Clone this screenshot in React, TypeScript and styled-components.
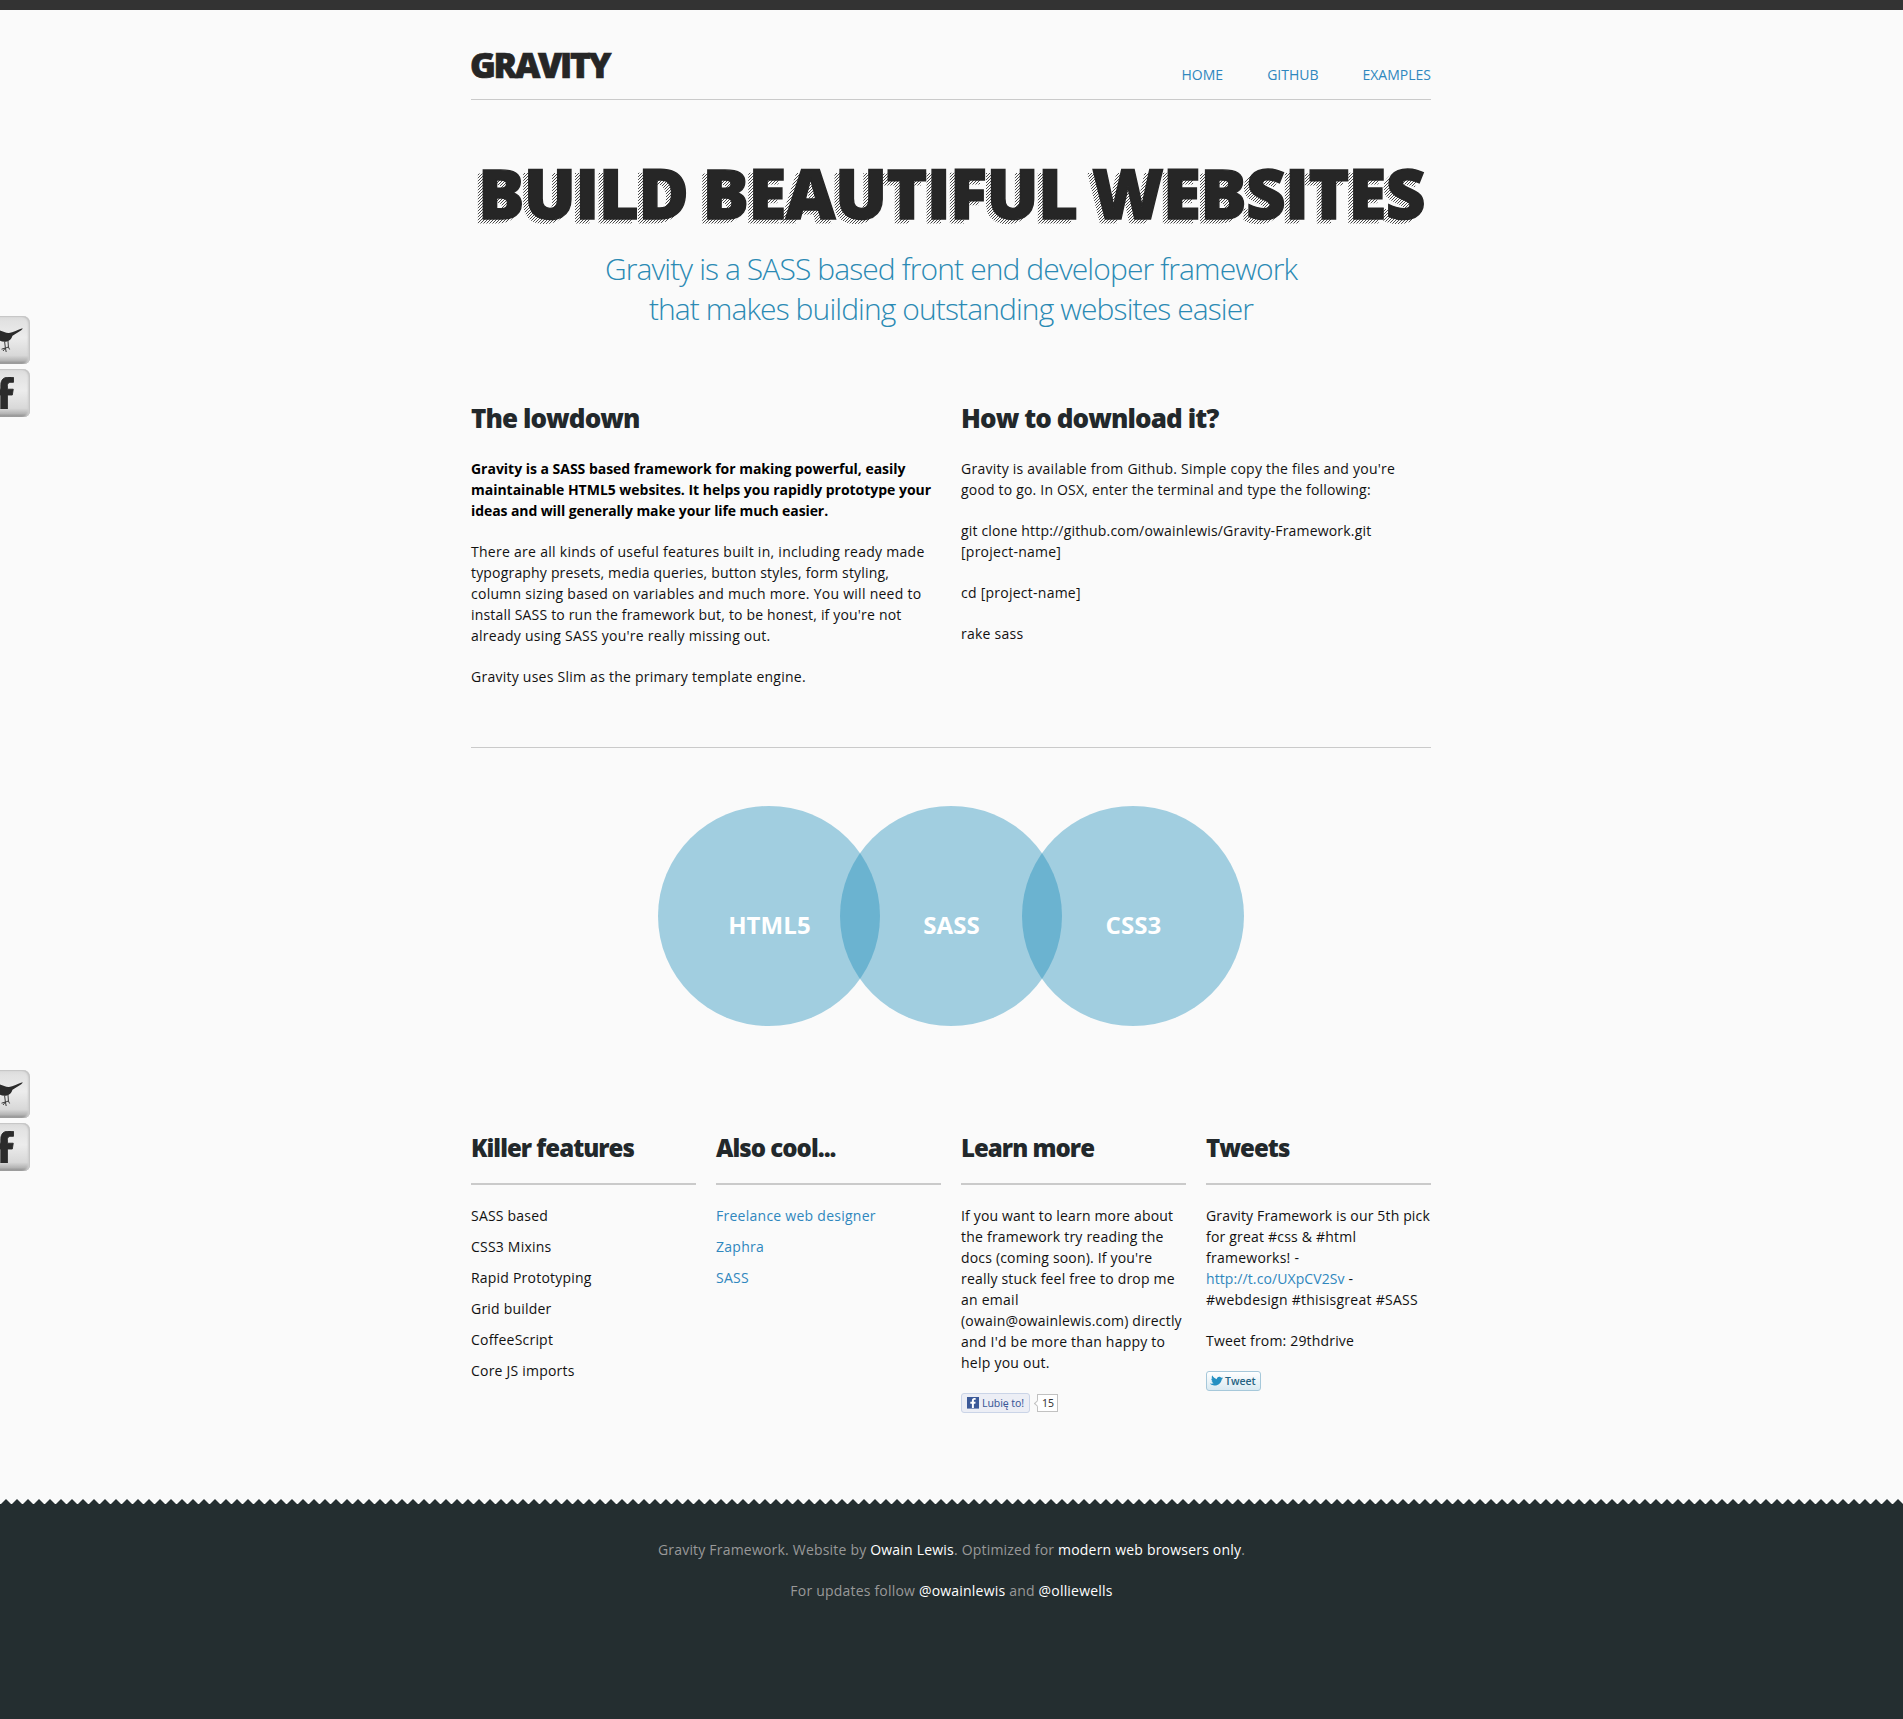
import React from 'react';
import styled, { createGlobalStyle } from 'styled-components';
import { FaFacebookF, FaTwitter } from 'react-icons/fa';

const ink = '#262626';
const link = '#2f87be';
const rule = '#cacaca';
const slate = '#242e30';

const GlobalStyle = createGlobalStyle`
  * { box-sizing: border-box; }
  body {
    margin: 0;
    background: #fafafa;
    color: #111;
    font: 400 14px/21px "Open Sans", "Noto Sans", sans-serif;
  }
  h1, h2, h3, p, ul { margin: 0; padding: 0; }
  a { color: ${link}; text-decoration: none; }
`;

const Page = styled.div`
  position: relative;
  display: flex;
  flex-direction: column;
  min-height: 1719px;
  overflow: hidden;
`;

const TopBar = styled.div`
  height: 10px;
  background: #333;
`;

const Centered = styled.div`
  display: flex;
  justify-content: center;
  padding-right: 1px;
`;

const Container = styled.main`
  width: 960px;
`;

const Header = styled.header`
  display: flex;
  justify-content: space-between;
  align-items: flex-end;
  height: 90px;
  padding-bottom: 14px;
  border-bottom: 1px solid ${rule};
`;

const Logo = styled.a`
  && { color: ${ink}; }
  margin: 0 0 2px -1px;
  font-size: 35px;
  line-height: 36px;
  font-weight: 800;
  letter-spacing: -2.3px;
  -webkit-text-stroke: 0.7px ${ink};
`;

const Nav = styled.nav`
  display: flex;
  gap: 44px;
`;

const Title = styled.h1`
  position: relative;
  z-index: 0;
  width: max-content;
  margin: 57px 0 0 7px;
  font-size: 69px;
  line-height: 70px;
  font-weight: 800;
  letter-spacing: -0.68px;
  word-spacing: -2.8px;
  white-space: nowrap;
  color: ${ink};
  -webkit-text-stroke: 1.4px ${ink};

  &::before {
    content: attr(data-text);
    position: absolute;
    z-index: -1;
    left: -5px;
    top: 4px;
    padding-bottom: 10px;
    color: transparent;
    -webkit-text-stroke: 1px transparent;
    background: repeating-linear-gradient(
      135deg,
      transparent 0,
      transparent 0.35px,
      #484848 0.35px,
      #484848 1.06px,
      transparent 1.06px,
      transparent 2.12132px
    );
    -webkit-background-clip: text;
    background-clip: text;
  }
`;

const Subtitle = styled.p`
  margin-top: 22px;
  font-size: 30px;
  line-height: 40px;
  font-weight: 300;
  letter-spacing: -0.9px;
  text-align: center;
  color: #2b8ab4;
`;

const Intro = styled.section`
  display: grid;
  grid-template-columns: 1fr 1fr;
  gap: 20px;
  margin-top: 76px;
  padding-bottom: 60px;
  border-bottom: 1px solid ${rule};
`;

const IntroHeading = styled.h2`
  margin-bottom: 27px;
  font-size: 26px;
  line-height: 26px;
  font-weight: 800;
  letter-spacing: -0.91px;
  color: #22282b;
`;

const Stack = styled.div`
  display: flex;
  flex-direction: column;
  align-items: flex-start;
  gap: 20px;
`;

const Copy = styled.p<{ $strong?: boolean }>`
  white-space: nowrap;
  font-weight: ${(p) => (p.$strong ? 700 : 400)};
  letter-spacing: ${(p) => (p.$strong ? '-0.02px' : '0.25px')};
  color: ${(p) => (p.$strong ? '#000' : '#111')};
`;

const Line = styled.span<{ $track?: number }>`
  display: block;
  ${(p) => p.$track !== undefined && `letter-spacing: ${p.$track}px;`}
`;

const Venn = styled.section`
  display: flex;
  justify-content: center;
  margin-top: 58px;
`;

const Circle = styled.div`
  width: 222px;
  height: 220px;
  padding: 107px 0 0 1px;
  border-radius: 50%;
  background: rgba(23, 138, 184, 0.393);
  color: #fff;
  font-size: 24px;
  line-height: 24px;
  font-weight: 700;
  letter-spacing: 0.1px;
  text-align: center;

  & + & { margin-left: -40px; }
`;

const Features = styled.section`
  display: grid;
  grid-template-columns: repeat(4, 225px);
  gap: 20px;
  height: 277px;
  margin-top: 110px;
`;

const ColumnHeading = styled.h3`
  margin-bottom: 20px;
  padding-bottom: 23px;
  border-bottom: 2px solid ${rule};
  font-size: 24px;
  line-height: 24px;
  font-weight: 800;
  letter-spacing: -0.97px;
  color: #22282b;
`;

const List = styled.ul<{ $track: number }>`
  display: flex;
  flex-direction: column;
  gap: 10px;
  list-style: none;
  letter-spacing: ${(p) => p.$track}px;
`;

const LikeRow = styled.div`
  display: flex;
  align-items: center;
  gap: 7px;
  font: 11px/18px "Noto Sans", sans-serif;
`;

const LikeButton = styled.span`
  display: flex;
  align-items: center;
  gap: 3px;
  width: 69px;
  height: 20px;
  padding-left: 5px;
  border: 1px solid #cad4e7;
  border-radius: 3px;
  background: #eceef5;
  color: #3b5998;
  font-size: 10.5px;
  letter-spacing: -0.1px;
  white-space: nowrap;
`;

const LikeMark = styled.span`
  display: flex;
  align-items: flex-end;
  justify-content: flex-end;
  width: 12px;
  height: 12px;
  padding-right: 1px;
  border-bottom: 1px solid #8394bd;
  background: #3b5998;
  color: #fff;
  font-size: 10px;
`;

const LikeCount = styled.span`
  position: relative;
  width: 21px;
  height: 18px;
  padding-left: 1px;
  border: 1px solid #c1c1c1;
  background: #fff;
  color: #333;
  font-size: 10.5px;
  line-height: 16px;
  text-align: center;

  &::before {
    content: '';
    position: absolute;
    left: -3px;
    top: 6px;
    width: 4px;
    height: 4px;
    border: solid #c1c1c1;
    border-width: 0 0 1px 1px;
    background: #fff;
    transform: rotate(45deg);
  }
`;

const TweetButton = styled.span`
  display: flex;
  align-items: center;
  gap: 2px;
  width: 55px;
  height: 20px;
  padding-left: 3px;
  border: 1px solid #a6c8da;
  border-radius: 3px;
  background: linear-gradient(#fff, #d9e9f1);
  color: #246281;
  font: 600 10.5px/18px "Open Sans", sans-serif;

  svg {
    width: 13px;
    height: 12px;
    color: #2590c2;
    transform: rotate(12deg);
  }
`;

const Footer = styled.footer`
  height: 220px;
  margin-top: 86px;
  padding-top: 40px;
  background:
    conic-gradient(from 135deg at 50% -0.3px, ${slate} 90deg, transparent 0) 0.5px 0 / 11px 5px repeat-x,
    linear-gradient(${slate}, ${slate}) 0 5px no-repeat;
  color: #999;
  text-align: center;
  letter-spacing: 0.2px;

  p + p { margin-top: 20px; }
  a { color: #fff; }
`;

const Social = styled.aside<{ $top: number }>`
  position: absolute;
  left: 0;
  top: ${(p) => p.$top}px;
  display: flex;
  flex-direction: column;
  gap: 5px;
`;

const SocialTile = styled.a`
  display: flex;
  width: 30px;
  height: 48px;
  overflow: hidden;
  border-radius: 0 7px 6px 0;
  background: linear-gradient(#dadada 0, #e2e2e2 12%, #ececec 45%, #d8d8d8 82%, #b4b4b4 93%, #848484 100%);
  box-shadow: inset -1px 1px 1px #c6c6c6, inset -2px 0 2px #cecece;
`;

const TileArt = styled.svg`
  width: 30px;
  height: 47px;
`;

const FacebookArt = styled(FaFacebookF)`
  flex: none;
  width: 21px;
  height: 32px;
  margin: 8px 0 0 -6px;
  color: #2b2b2b;
  stroke: #2b2b2b;
  stroke-width: 14px;
`;

const Bird = () => (
  <TileArt viewBox="0 0 30 47" fill="none">
    <path
      d="M0 14.6 C3 15.6 6 17.2 9 17 C13 16.7 18 13.6 22.4 12.2 C23 12.8 22 13.7 20.5 14.7 L12.5 19.8 C11.5 23 9.5 25.3 6 25.8 C3.5 26 1.5 25.6 0 24.8 Z"
      fill="#2b2b2b"
    />
    <path
      d="M4.6 25.5 L5.4 32 M8 25 L8.4 31 M5.4 32 L1.5 33.2 M5.4 32 L6.2 36 M5.4 32 L3 35 M8.4 31 L5.8 32 M8.4 31 L9.6 33.5"
      stroke="#3a3a3a"
      strokeWidth="1"
    />
  </TileArt>
);

const SocialBar = ({ top }: { top: number }) => (
  <Social $top={top}>
    <SocialTile aria-label="Twitter"><Bird /></SocialTile>
    <SocialTile aria-label="Facebook"><FacebookArt preserveAspectRatio="none" /></SocialTile>
  </Social>
);

const features = ['SASS based', 'CSS3 Mixins', 'Rapid Prototyping', 'Grid builder', 'CoffeeScript', 'Core JS imports'];
const coolLinks = ['Freelance web designer', 'Zaphra', 'SASS'];

export default function App() {
  return (
    <Page>
      <GlobalStyle />
      <TopBar />
      <Centered>
        <Container>
          <Header>
            <Logo>GRAVITY</Logo>
            <Nav>
              <a>HOME</a>
              <a>GITHUB</a>
              <a>EXAMPLES</a>
            </Nav>
          </Header>

          <Title data-text="BUILD BEAUTIFUL WEBSITES">BUILD BEAUTIFUL WEBSITES</Title>
          <Subtitle>
            <Line>Gravity is a SASS based front end developer framework</Line>
            <Line>that makes building outstanding websites easier</Line>
          </Subtitle>

          <Intro>
            <div>
              <IntroHeading>The lowdown</IntroHeading>
              <Stack>
                <Copy $strong>
                  <Line>Gravity is a SASS based framework for making powerful, easily</Line>
                  <Line>maintainable HTML5 websites. It helps you rapidly prototype your</Line>
                  <Line $track={-0.09}>ideas and will generally make your life much easier.</Line>
                </Copy>
                <Copy>
                  <Line $track={0.28}>There are all kinds of useful features built in, including ready made</Line>
                  <Line $track={0.18}>typography presets, media queries, button styles, form styling,</Line>
                  <Line $track={0.27}>column sizing based on variables and much more. You will need to</Line>
                  <Line $track={0.18}>install SASS to run the framework but, to be honest, if you're not</Line>
                  <Line>already using SASS you're really missing out.</Line>
                </Copy>
                <Copy>Gravity uses Slim as the primary template engine.</Copy>
              </Stack>
            </div>
            <div>
              <IntroHeading>How to download it?</IntroHeading>
              <Stack>
                <Copy>
                  <Line $track={0.24}>Gravity is available from Github. Simple copy the files and you're</Line>
                  <Line $track={0.19}>good to go. In OSX, enter the terminal and type the following:</Line>
                </Copy>
                <Copy>
                  <Line $track={0.18}>git clone http://github.com/owainlewis/Gravity-Framework.git</Line>
                  <Line>[project-name]</Line>
                </Copy>
                <Copy>cd [project-name]</Copy>
                <Copy>rake sass</Copy>
              </Stack>
            </div>
          </Intro>

          <Venn>
            <Circle>HTML5</Circle>
            <Circle>SASS</Circle>
            <Circle>CSS3</Circle>
          </Venn>

          <Features>
            <div>
              <ColumnHeading>Killer features</ColumnHeading>
              <List $track={0.21}>{features.map((f) => <li key={f}>{f}</li>)}</List>
            </div>
            <div>
              <ColumnHeading>Also cool...</ColumnHeading>
              <List $track={0.26}>{coolLinks.map((l) => <li key={l}><a>{l}</a></li>)}</List>
            </div>
            <div>
              <ColumnHeading>Learn more</ColumnHeading>
              <Stack>
                <Copy>
                  <Line $track={0.17}>If you want to learn more about</Line>
                  <Line $track={0.22}>the framework try reading the</Line>
                  <Line $track={0.18}>docs (coming soon). If you're</Line>
                  <Line $track={0.2}>really stuck feel free to drop me</Line>
                  <Line>an email</Line>
                  <Line $track={0.19}>(owain@owainlewis.com) directly</Line>
                  <Line $track={0.23}>and I'd be more than happy to</Line>
                  <Line>help you out.</Line>
                </Copy>
                <LikeRow>
                  <LikeButton>
                    <LikeMark><FaFacebookF /></LikeMark>
                    Lubię to!
                  </LikeButton>
                  <LikeCount>15</LikeCount>
                </LikeRow>
              </Stack>
            </div>
            <div>
              <ColumnHeading>Tweets</ColumnHeading>
              <Stack>
                <Copy>
                  <Line $track={0.15}>Gravity Framework is our 5th pick</Line>
                  <Line $track={0.2}>for great #css &amp; #html</Line>
                  <Line>frameworks! -</Line>
                  <Line $track={0.1}><a>http://t.co/UXpCV2Sv</a> -</Line>
                  <Line $track={0.26}>#webdesign #thisisgreat #SASS</Line>
                </Copy>
                <Copy><Line $track={0.18}>Tweet from: 29thdrive</Line></Copy>
                <TweetButton><FaTwitter />Tweet</TweetButton>
              </Stack>
            </div>
          </Features>
        </Container>
      </Centered>

      <Footer>
        <p>
          Gravity Framework. Website by <a>Owain Lewis</a>. Optimized for <a>modern web browsers only</a>.
        </p>
        <p>
          For updates follow <a>@owainlewis</a> and <a>@olliewells</a>
        </p>
      </Footer>

      <SocialBar top={316} />
      <SocialBar top={1070} />
    </Page>
  );
}
